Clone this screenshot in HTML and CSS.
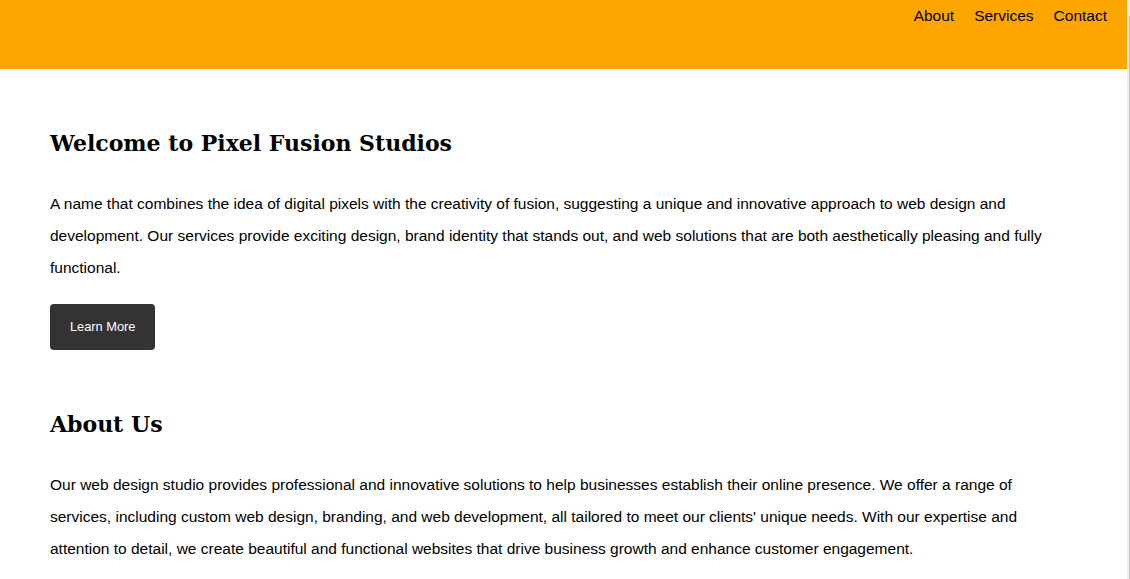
FILE: index.html
```html
<!DOCTYPE html>
<html lang="en">
<head>
<meta charset="utf-8">
<title>Pixel Fusion Studios</title>
<link rel="stylesheet" href="styles.css">
</head>
<body>
<header class="site-header">
  <nav class="nav">
    <a class="nav-link" href="#about">About</a>
    <a class="nav-link" href="#services">Services</a>
    <a class="nav-link" href="#contact">Contact</a>
  </nav>
</header>
<main class="main">
  <section class="section">
    <h2 class="section-title">Welcome to Pixel Fusion Studios</h2>
    <p class="section-text">A name that combines the idea of digital pixels with the creativity of fusion, suggesting a unique and innovative approach to web design and development. Our services provide exciting design, brand identity that stands out, and web solutions that are both aesthetically pleasing and fully functional.</p>
    <a class="btn" href="#about">Learn More</a>
  </section>
  <section class="section" id="about">
    <h2 class="section-title">About Us</h2>
    <p class="section-text">Our web design studio provides professional and innovative solutions to help businesses establish their online presence. We offer a range of services, including custom web design, branding, and web development, all tailored to meet our clients' unique needs. With our expertise and attention to detail, we create beautiful and functional websites that drive business growth and enhance customer engagement.</p>
  </section>
</main>
<div class="scroll-strip"><div class="scroll-thumb"></div></div>
</body>
</html>
```
FILE: styles.css
```css
html, body {
  margin: 0;
  padding: 0;
}
body {
  margin-right: 3px;
  font-family: "Liberation Sans", Arial, sans-serif;
  font-size: 15.5px;
  line-height: 32px;
  color: #000;
  background: #fff;
  overflow: hidden;
}
.site-header {
  background: #ffa500;
  height: 69px;
  box-sizing: border-box;
  padding: 6px 20px 0 20px;
  display: flex;
  justify-content: flex-end;
  align-items: flex-start;
}
.nav {
  display: flex;
  gap: 20px;
  line-height: 20px;
}
.nav-link {
  color: #000;
  text-decoration: none;
  font-size: 15.5px;
}
.main {
  padding: 0 50px;
}
.section {
  padding-top: 50px;
}
.section-title {
  font-family: "DejaVu Serif", Georgia, serif;
  font-weight: bold;
  font-size: 22px;
  line-height: 48px;
  margin: 0 0 21px 0;
}
.section-text {
  margin: 0 0 20px 0;
}
.btn {
  display: inline-block;
  background: #333;
  color: #fff;
  text-decoration: none;
  font-size: 12.8px;
  line-height: 26px;
  padding: 10px 20px;
  border-radius: 4px;
}
.scroll-strip {
  position: fixed;
  top: 0;
  right: 0;
  bottom: 0;
  width: 3px;
  background: #f0f0f0;
}
.scroll-thumb {
  position: absolute;
  top: 16px;
  bottom: 0;
  right: 0;
  width: 1px;
  background: #c1c1c1;
}
```
